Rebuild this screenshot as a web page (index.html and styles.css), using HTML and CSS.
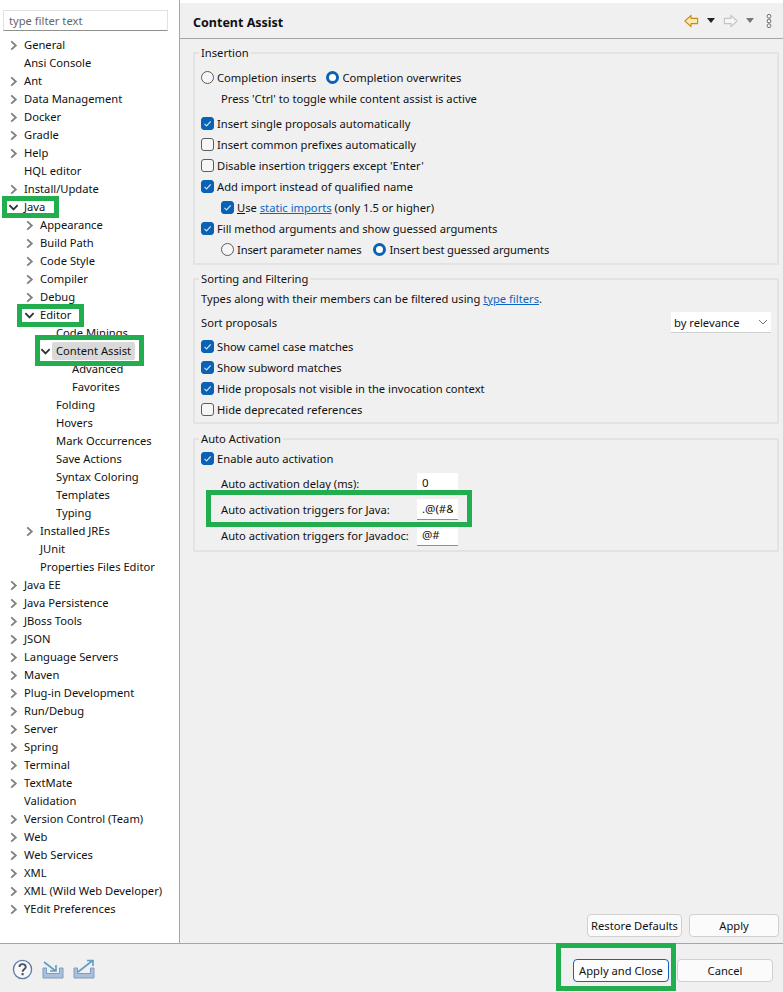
FILE: index.html
```html
<!DOCTYPE html>
<html lang="en">
<head>
<meta charset="utf-8">
<title>Preferences</title>
<link rel="stylesheet" href="styles.css">
</head>
<body>
<svg class="defs" width="0" height="0" aria-hidden="true">
  <symbol id="cr" viewBox="0 0 10 12"><path d="M2.5 1.5 7.5 6 2.5 10.5" fill="none" stroke="#808080" stroke-width="2"/></symbol>
  <symbol id="cd" viewBox="0 0 12 10"><path d="M1.5 2.5 6 7 10.5 2.5" fill="none" stroke="#333" stroke-width="2"/></symbol>
  <symbol id="ck" viewBox="0 0 13 13"><path d="M3.5 6.8 5.6 8.9 9.7 4.3" fill="none" stroke="#cfe2f5" stroke-width="1.2"/></symbol>
</svg>
<div class="app">
  <div class="main">
    <aside class="sidebar">
      <input class="filter" placeholder="type filter text">
      <ul class="tree">
        <li class="row l0"><svg class="tw"><use href="#cr"/></svg>General</li>
        <li class="row l0">Ansi Console</li>
        <li class="row l0"><svg class="tw"><use href="#cr"/></svg>Ant</li>
        <li class="row l0"><svg class="tw"><use href="#cr"/></svg>Data Management</li>
        <li class="row l0"><svg class="tw"><use href="#cr"/></svg>Docker</li>
        <li class="row l0"><svg class="tw"><use href="#cr"/></svg>Gradle</li>
        <li class="row l0"><svg class="tw"><use href="#cr"/></svg>Help</li>
        <li class="row l0">HQL editor</li>
        <li class="row l0"><svg class="tw"><use href="#cr"/></svg>Install/Update</li>
        <li class="row l0"><svg class="tw"><use href="#cd"/></svg>Java</li>
        <li class="row l1"><svg class="tw"><use href="#cr"/></svg>Appearance</li>
        <li class="row l1"><svg class="tw"><use href="#cr"/></svg>Build Path</li>
        <li class="row l1"><svg class="tw"><use href="#cr"/></svg>Code Style</li>
        <li class="row l1"><svg class="tw"><use href="#cr"/></svg>Compiler</li>
        <li class="row l1"><svg class="tw"><use href="#cr"/></svg>Debug</li>
        <li class="row l1"><svg class="tw"><use href="#cd"/></svg>Editor</li>
        <li class="row l2">Code Minings</li>
        <li class="row l2"><svg class="tw"><use href="#cd"/></svg><span class="sel">Content Assist</span></li>
        <li class="row l3">Advanced</li>
        <li class="row l3">Favorites</li>
        <li class="row l2">Folding</li>
        <li class="row l2">Hovers</li>
        <li class="row l2">Mark Occurrences</li>
        <li class="row l2">Save Actions</li>
        <li class="row l2">Syntax Coloring</li>
        <li class="row l2">Templates</li>
        <li class="row l2">Typing</li>
        <li class="row l1"><svg class="tw"><use href="#cr"/></svg>Installed JREs</li>
        <li class="row l1">JUnit</li>
        <li class="row l1">Properties Files Editor</li>
        <li class="row l0"><svg class="tw"><use href="#cr"/></svg>Java EE</li>
        <li class="row l0"><svg class="tw"><use href="#cr"/></svg>Java Persistence</li>
        <li class="row l0"><svg class="tw"><use href="#cr"/></svg>JBoss Tools</li>
        <li class="row l0"><svg class="tw"><use href="#cr"/></svg>JSON</li>
        <li class="row l0"><svg class="tw"><use href="#cr"/></svg>Language Servers</li>
        <li class="row l0"><svg class="tw"><use href="#cr"/></svg>Maven</li>
        <li class="row l0"><svg class="tw"><use href="#cr"/></svg>Plug-in Development</li>
        <li class="row l0"><svg class="tw"><use href="#cr"/></svg>Run/Debug</li>
        <li class="row l0"><svg class="tw"><use href="#cr"/></svg>Server</li>
        <li class="row l0"><svg class="tw"><use href="#cr"/></svg>Spring</li>
        <li class="row l0"><svg class="tw"><use href="#cr"/></svg>Terminal</li>
        <li class="row l0"><svg class="tw"><use href="#cr"/></svg>TextMate</li>
        <li class="row l0">Validation</li>
        <li class="row l0"><svg class="tw"><use href="#cr"/></svg>Version Control (Team)</li>
        <li class="row l0"><svg class="tw"><use href="#cr"/></svg>Web</li>
        <li class="row l0"><svg class="tw"><use href="#cr"/></svg>Web Services</li>
        <li class="row l0"><svg class="tw"><use href="#cr"/></svg>XML</li>
        <li class="row l0"><svg class="tw"><use href="#cr"/></svg>XML (Wild Web Developer)</li>
        <li class="row l0"><svg class="tw"><use href="#cr"/></svg>YEdit Preferences</li>
      </ul>
    </aside>
    <section class="panel">
      <header class="head">
        <h1 class="title">Content Assist</h1>
        <div class="nav">
          <svg class="arrow" viewBox="0 0 16 14"><path d="M7.5 1 1 7l6.5 6V9.8h7V4.2h-7z" fill="#fde9a9" stroke="#c88a1e" stroke-width="1.2" stroke-linejoin="round"/></svg>
          <span class="drop dark"></span>
          <svg class="arrow" viewBox="0 0 16 14"><path d="M8.5 1 15 7l-6.5 6V9.8h-7V4.2h7z" fill="#f6f6f6" stroke="#c4c4c4" stroke-width="1.2" stroke-linejoin="round"/></svg>
          <span class="drop last"></span>
          <svg class="dots" viewBox="0 0 6 14"><g fill="#f4f4f4" stroke="#6f6f6f" stroke-width="1"><circle cx="3" cy="2.3" r="1.9"/><circle cx="3" cy="7" r="1.9"/><circle cx="3" cy="11.7" r="1.9"/></g></svg>
        </div>
      </header>
      <div class="body">
        <fieldset class="group g1">
          <legend>Insertion</legend>
          <div class="line inline">
            <label class="opt"><span class="radio"></span>Completion inserts</label>
            <label class="opt"><span class="radio on"></span>Completion overwrites</label>
          </div>
          <div class="line indent">Press 'Ctrl' to toggle while content assist is active</div>
          <div class="spaced">
            <label class="line opt"><span class="check on"><svg><use href="#ck"/></svg></span>Insert single proposals automatically</label>
            <label class="line opt"><span class="check"></span>Insert common prefixes automatically</label>
            <label class="line opt"><span class="check"></span>Disable insertion triggers except 'Enter'</label>
            <label class="line opt"><span class="check on"><svg><use href="#ck"/></svg></span>Add import instead of qualified name</label>
            <label class="line opt sub"><span class="check on"><svg><use href="#ck"/></svg></span><span><u>U</u>se <a class="link" href="#">static imports</a> (only 1.5 or higher)</span></label>
            <label class="line opt"><span class="check on"><svg><use href="#ck"/></svg></span>Fill method arguments and show guessed arguments</label>
            <div class="line inline sub wide">
              <label class="opt"><span class="radio"></span>Insert parameter names</label>
              <label class="opt"><span class="radio on"></span>Insert best guessed arguments</label>
            </div>
          </div>
        </fieldset>
        <fieldset class="group g2">
          <legend>Sorting and Filtering</legend>
          <div class="line">Types along with their members can be filtered using&nbsp;<a class="link" href="#">type filters</a>.</div>
          <div class="line sortrow">
            <span>Sort proposals</span>
            <div class="select">by relevance<svg viewBox="0 0 10 6"><path d="M1 1l4 4 4-4" fill="none" stroke="#777"/></svg></div>
          </div>
          <label class="line opt"><span class="check on"><svg><use href="#ck"/></svg></span>Show camel case matches</label>
          <label class="line opt"><span class="check on"><svg><use href="#ck"/></svg></span>Show subword matches</label>
          <label class="line opt"><span class="check on"><svg><use href="#ck"/></svg></span>Hide proposals not visible in the invocation context</label>
          <label class="line opt"><span class="check"></span>Hide deprecated references</label>
        </fieldset>
        <fieldset class="group g3">
          <legend>Auto Activation</legend>
          <label class="line opt"><span class="check on"><svg><use href="#ck"/></svg></span>Enable auto activation</label>
          <div class="fields">
            <div class="field"><span>Auto activation delay (ms):</span><input class="text" value="0"></div>
            <div class="field"><span>Auto activation triggers for Java:</span><input class="text" value=".@(#&amp;"></div>
            <div class="field"><span>Auto activation triggers for Javadoc:</span><input class="text" value="@#"></div>
          </div>
        </fieldset>
        <div class="actions">
          <button class="btn restore">Restore Defaults</button>
          <button class="btn apply">Apply</button>
        </div>
      </div>
    </section>
  </div>
  <footer class="foot">
    <div class="tools">
      <svg class="help" viewBox="0 0 22 22"><circle cx="11" cy="11" r="9.5" fill="#f6f8fb" stroke="#5f7ea6" stroke-width="1.4"/><path d="M7.8 8.5c0-4.2 6.600-4 6.600-.2 0 2.500-3.300 2.300-3.300 5" fill="none" stroke="#4a4f5a" stroke-width="2"/><rect x="10" y="14.7" width="2.2" height="2.3" fill="#4a4f5a"/></svg>
      <svg class="tray" viewBox="0 0 22 20"><path d="M1 9h3.500v5.500h13V9H21v10H1z" fill="#a9bfdc" stroke="#7f9cc0"/><path d="M2 3 13 11.500M14 6v6H8" fill="none" stroke="#5f9cc7" stroke-width="1.600"/></svg>
      <svg class="tray" viewBox="0 0 22 20"><path d="M1 9h3.500v5.500h13V9H21v10H1z" fill="#a9bfdc" stroke="#7f9cc0"/><path d="M5 13 19 2M14 1.500h6V7" fill="none" stroke="#5f9cc7" stroke-width="1.600"/></svg>
    </div>
    <div class="finish">
      <button class="btn primary">Apply and Close</button>
      <button class="btn cancel">Cancel</button>
    </div>
  </footer>
  <span class="mark m-java"></span>
  <span class="mark m-editor"></span>
  <span class="mark m-assist"></span>
  <span class="mark m-trigger"></span>
  <span class="mark m-close"></span>
</div>
</body>
</html>
```
FILE: styles.css
```css
* { box-sizing: border-box; }
html, body { margin: 0; height: 100%; background: #fff; }
body {
  font-family: "Noto Sans", "Open Sans", sans-serif;
  font-size: 11.2px;
  color: #111;
  overflow: hidden;
}
.defs { position: absolute; }
.app { position: relative; width: 783px; height: 992px; display: flex; flex-direction: column; }
.main { flex: 1; display: flex; min-height: 0; }

/* sidebar */
.sidebar { width: 180px; flex: none; border-right: 1px solid #a6a6a6; background: #fff; padding: 10px 0 0 3px; overflow: hidden; }
.filter {
  display: block; width: 165px; height: 21px; padding: 0 5px; margin: 0;
  font: inherit; color: #111; background: #fff;
  border: 1px solid #e2e2e2; border-bottom-color: #8f8f8f; outline: 0;
}
.filter::placeholder { color: #666; opacity: 1; }
.tree { list-style: none; margin: 5px 0 0; padding: 0; }
.row { position: relative; height: 18px; line-height: 18px; white-space: nowrap; }
.l0 { padding-left: 21px; }
.l1 { padding-left: 37px; }
.l2 { padding-left: 53px; }
.l3 { padding-left: 69px; }
.tw { position: absolute; top: 4px; width: 11px; height: 11px; margin-left: -16px; }
.sel { display: inline-block; background: #d9d9d9; border-radius: 2px; height: 18px; margin-left: -4px; padding: 0 4px; }

/* right panel */
.panel { flex: 1; min-width: 0; margin-top: 3px; background: #f0f0f0; display: flex; flex-direction: column; }
.head { height: 36px; flex: none; border-bottom: 1px solid #a6a6a6; display: flex; align-items: center; justify-content: space-between; padding: 3px 11px 0 13px; }
.title { margin: 0; font-size: 12.5px; font-weight: 700; }
.nav { display: flex; align-items: center; margin-top: -3px; }
.arrow { width: 15px; height: 14px; display: block; flex: none; }
.drop { width: 0; height: 0; flex: none; border: 4px solid transparent; border-top: 5px solid #777; border-bottom: 0; margin: 0 8px; }
.drop.dark { border-top-color: #222; }
.drop.last { margin-right: 12px; }
.dots { width: 6px; height: 14px; flex: none; display: block; }
.body { flex: 1; min-height: 0; display: flex; flex-direction: column; padding: 6px 4px 6px 13px; }
.group { margin: 0; min-width: 0; border: 2px solid #e3e3e3; padding: 0 6px; border-radius: 1px; }
.group legend { padding: 0 2px; margin-left: -2px; line-height: 16px; height: 16px; }
.g1 { padding-top: 6px; padding-bottom: 3px; }
.g2 { margin-top: 6px; padding-top: 1px; padding-bottom: 2px; }
.g3 { margin-top: 7px; padding-top: 1px; padding-bottom: 2px; }
.line { display: flex; align-items: center; height: 21px; white-space: nowrap; }
.inline .opt + .opt { margin-left: 10px; }
.wide { letter-spacing: -0.15px; }
.wide .opt + .opt { margin-left: 12px; }
.indent { padding-left: 20px; }
.sub { padding-left: 20px; }
.spaced { margin-top: 4px; }
.opt { display: flex; align-items: center; white-space: nowrap; }
.radio { width: 13px; height: 13px; flex: none; border: 1px solid #5c5c5c; border-radius: 50%; background: #f6f6f6; margin-right: 3px; }
.radio.on { border: 3.5px solid #0a62b6; background: #fff; }
.check { width: 13px; height: 13px; flex: none; border: 1px solid #5c5c5c; border-radius: 3px; background: #f6f6f6; margin-right: 3px; position: relative; }
.check.on { background: #0a62b6; border-color: #0a62b6; }
.check svg { position: absolute; left: -1px; top: -1px; width: 13px; height: 13px; display: block; }
.link { color: #0a66c2; }
.sortrow { justify-content: space-between; height: 27px; }
.select { width: 100px; height: 21px; background: #fff; border-bottom: 1px solid #d0d0d0; display: flex; align-items: center; justify-content: space-between; padding: 0 3px; }
.select svg { width: 10px; height: 6px; }
.fields { margin-top: 1px; }
.field { display: grid; grid-template-columns: 196px 41px; align-items: center; height: 26px; padding-left: 20px; }
.text { width: 41px; height: 21px; padding: 0 5px; margin: 0; font: inherit; font-size: 11.5px; color: #111; background: #fff; border: 0; border-bottom: 1px solid #8f8f8f; outline: 0; }

.btn { font: inherit; color: #111; height: 23px; padding: 0; background: #fbfbfb; border: 1px solid #d0d0d0; border-radius: 4px; }
.actions { margin-top: auto; display: flex; justify-content: flex-end; gap: 7px; }
.restore { width: 95px; }
.apply { width: 90px; }

/* footer */
.foot { height: 49px; flex: none; background: #f0f0f0; border-top: 1px solid #a6a6a6; display: flex; justify-content: space-between; padding: 15px 10px 0 12px; }
.tools { display: flex; align-items: flex-start; }
.help { width: 21px; height: 21px; display: block; }
.tray { width: 22px; height: 20px; margin-left: 9px; }
.finish { display: flex; gap: 8px; }
.primary { width: 96px; border-color: #0a66c2; background: #fdfdfd; }
.cancel { width: 96px; }

/* green review annotations drawn over the screenshot */
.mark { position: absolute; border: 5px solid #22ad4e; pointer-events: none; }
.m-java { left: 2px; top: 196px; width: 57px; height: 22px; }
.m-editor { left: 17px; top: 304px; width: 67px; height: 23px; }
.m-assist { left: 35px; top: 335px; width: 109px; height: 31px; }
.m-trigger { left: 206px; top: 490px; width: 266px; height: 37px; }
.m-close { left: 556px; top: 943px; width: 120px; height: 48px; }
```
